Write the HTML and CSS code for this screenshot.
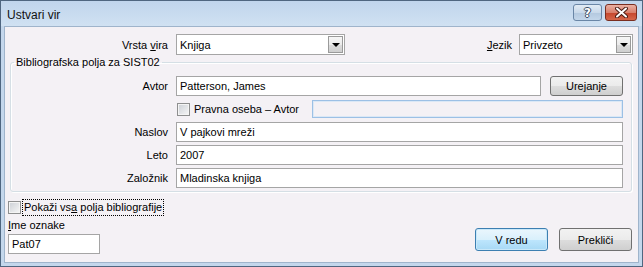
FILE: index.html
```html
<!DOCTYPE html>
<html lang="sl">
<head>
    <meta charset="UTF-8">
    <title>Ustvari vir</title>
    <link rel="stylesheet" href="styles.css">
</head>
<body>
    <div class="window">
        <div class="titlebar">
            <span class="title">Ustvari vir</span>
            <div class="caption-buttons">
                <div class="cap-btn help"><span>?</span></div>
                <div class="cap-btn close">
                    <svg width="13" height="11" viewBox="0 0 13 11">
                        <path d="M2 1.5 L11 9.5 M11 1.5 L2 9.5" stroke="#4a1c14" stroke-width="4" stroke-linecap="round"/>
                        <path d="M2 1.5 L11 9.5 M11 1.5 L2 9.5" stroke="#ffffff" stroke-width="2" stroke-linecap="round"/>
                    </svg>
                </div>
            </div>
        </div>

        <div class="content">
            <div class="top-row">
                <span class="lbl lbl-type">Vrsta <u>v</u>ira</span>
                <div class="select sel-type">
                    <span class="select-text">Knjiga</span>
                    <span class="drop"></span>
                </div>
                <span class="lbl lbl-lang"><u>J</u>ezik</span>
                <div class="select sel-lang">
                    <span class="select-text">Privzeto</span>
                    <span class="drop"></span>
                </div>
            </div>

            <fieldset class="fields">
                <legend>Bibliografska polja za SIST02</legend>
                <div class="row">
                    <span class="lbl">Avtor</span>
                    <div class="field grow">Patterson, James</div>
                    <div class="btn btn-edit">Urejanje</div>
                </div>
                <div class="row row-check">
                    <span class="lbl"></span>
                    <div class="check corp">
                        <span class="box"></span>
                        <span>Pravna oseba – Avtor</span>
                    </div>
                    <div class="field field-disabled"></div>
                </div>
                <div class="row">
                    <span class="lbl">Naslov</span>
                    <div class="field grow">V pajkovi mreži</div>
                </div>
                <div class="row">
                    <span class="lbl">Leto</span>
                    <div class="field grow">2007</div>
                </div>
                <div class="row">
                    <span class="lbl">Založnik</span>
                    <div class="field grow">Mladinska knjiga</div>
                </div>
            </fieldset>

            <div class="bottom">
                <div class="tag-col">
                    <div class="check show-all">
                        <span class="box"></span>
                        <span class="focus">Pokaži vs<u>a</u> polja bibliografije</span>
                    </div>
                    <div class="tag-lbl"><u>I</u>me oznake</div>
                    <div class="field tag">Pat07</div>
                </div>
                <div class="actions">
                    <div class="btn btn-default">V redu</div>
                    <div class="btn">Prekliči</div>
                </div>
            </div>
        </div>
    </div>
</body>
</html>
```

FILE: styles.css
```css
body {
    margin: 0;
    padding: 0;
    font-family: "Liberation Sans", Arial, sans-serif;
    font-size: 11px;
    color: #000;
    background: #ffffff;
}

u {
    text-decoration: underline;
    text-underline-offset: 1px;
}

.window {
    width: 643px;
    height: 267px;
    box-sizing: border-box;
    border: 1px solid #4f6680;
    background: #c4d7ec;
    padding: 0 3px 3px 3px;
    display: flex;
    flex-direction: column;
}

/* title bar */
.titlebar {
    height: 25px;
    display: flex;
    align-items: flex-start;
    justify-content: space-between;
    background: linear-gradient(#c0d5ec, #d0e1f2);
    margin: 0 -3px;
    padding: 0 5px 0 6px;
}

.title {
    font-size: 12px;
    line-height: 14px;
    margin-top: 7px;
    color: #111;
}

.caption-buttons {
    display: flex;
    gap: 3px;
    margin-top: 3px;
}

.cap-btn {
    height: 15px;
    border-radius: 3px;
    display: flex;
    align-items: center;
    justify-content: center;
}

.help {
    width: 27px;
    border: 1px solid #6a86a6;
    background: linear-gradient(#e2ebf5 0%, #c9d9ea 50%, #b3c8df 51%, #c3d6ea 100%);
}

.help span {
    font-family: "DejaVu Sans", sans-serif;
    font-weight: bold;
    font-size: 12px;
    line-height: 12px;
    color: #fff;
    text-shadow: -1px 0 #3b4d63, 1px 0 #3b4d63, 0 -1px #3b4d63, 0 1px #3b4d63;
}

.close {
    width: 30px;
    border: 1px solid #7a2e20;
    background: linear-gradient(#eab0a3 0%, #d9806c 50%, #c5452c 51%, #d5664a 100%);
}

/* dialog body */
.content {
    flex: 1;
    background: #f4f1f5;
    border: 1px solid #9fb4cb;
    display: flex;
    flex-direction: column;
}

.top-row {
    display: flex;
    align-items: center;
    padding: 7px 5px 0 6px;
}

.lbl {
    text-align: right;
    white-space: nowrap;
}

.lbl-type {
    width: 157px;
    margin-right: 8px;
}

.lbl-lang {
    margin-left: auto;
    margin-right: 7px;
}

.select {
    height: 19px;
    border: 1px solid #a5a5a5;
    background: #fff;
    display: flex;
    align-items: center;
    justify-content: space-between;
    padding: 0 1px 0 3px;
}

.sel-type {
    width: 163px;
}

.sel-lang {
    width: 108px;
}

.drop {
    width: 15px;
    height: 17px;
    box-sizing: border-box;
    border: 1px solid #9a9a9a;
    background: linear-gradient(#f6f6f6 0%, #ebebeb 50%, #dcdcdc 51%, #cfcfcf 100%);
    display: flex;
    align-items: center;
    justify-content: center;
}

.drop::after {
    content: "";
    border-left: 4px solid transparent;
    border-right: 4px solid transparent;
    border-top: 4px solid #000;
}

/* group box */
.fields {
    margin: 1px 6px 0 5px;
    padding: 7px 8px 3px 0;
    border: 1px solid #d5dfe5;
    border-radius: 3px;
    box-shadow: inset 1px 1px 0 #fff, 1px 1px 0 #fff;
    display: flex;
    flex-direction: column;
    gap: 3px;
    min-width: 0;
}

.fields legend {
    margin-left: 3px;
    padding: 0 2px;
    line-height: 13px;
}

.row {
    display: flex;
    align-items: center;
    height: 20px;
}

.row .lbl {
    width: 157px;
    margin-right: 8px;
}

.field {
    height: 18px;
    border: 1px solid #a5a5a5;
    background: #fff;
    padding: 0 3px;
    line-height: 18px;
    white-space: nowrap;
}

.grow {
    flex: 1;
}

.btn {
    width: 71px;
    height: 18px;
    border: 1px solid #707070;
    border-radius: 3px;
    background: linear-gradient(#f2f2f2 0%, #ebebeb 50%, #dddddd 51%, #cfcfcf 100%);
    display: flex;
    align-items: center;
    justify-content: center;
}

.btn-edit {
    margin-left: 9px;
}

.check {
    display: flex;
    align-items: center;
}

.box {
    width: 11px;
    height: 11px;
    border: 1px solid #8e8f8f;
    background: linear-gradient(135deg, #cbcfd5, #f7f7f7);
    box-shadow: inset 0 0 0 1px #f4f4f4;
    margin-right: 4px;
}

.corp {
    margin-left: 1px;
    width: 135px;
}

.field-disabled {
    flex: 1;
    height: 16px;
    border: 1px solid #9cc0e5;
    box-shadow: inset 0 0 0 1px #dbe8f6;
    background: #f4f1f5;
}

/* bottom area */
.bottom {
    display: flex;
    justify-content: space-between;
    align-items: flex-end;
    padding: 0 6px 8px 3px;
    margin-top: auto;
}

.tag-col {
    display: flex;
    flex-direction: column;
    align-items: flex-start;
}

.show-all .box {
    margin-right: 2px;
}

.focus {
    outline: 1px dotted #000;
    outline-offset: 0;
    padding: 1px 1px;
    line-height: 13px;
}

.tag-lbl {
    margin-top: 3px;
    line-height: 14px;
}

.tag {
    width: 84px;
    margin-top: 2px;
}

.actions {
    display: flex;
    gap: 11px;
    margin-bottom: 3px;
}

.actions .btn {
    height: 21px;
}

.btn-default {
    border-color: #3c7fb1;
    background: linear-gradient(#eaf6fd 0%, #d9f0fc 50%, #bee6fd 51%, #a7d9f5 100%);
    box-shadow: inset 0 0 0 1px #c9e8f9;
}
```
